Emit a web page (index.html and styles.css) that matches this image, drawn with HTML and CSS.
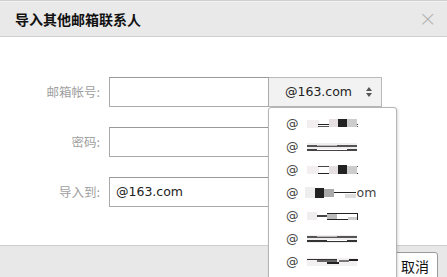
FILE: index.html
```html
<!DOCTYPE html>
<html>
<head lang="zh">
    <meta charset="UTF-8">
    <title>导入其他邮箱联系人</title>
    <link rel="stylesheet" href="styles.css">
</head>
<body>
<div class="dialog">
    <div class="hd">
        <span class="title">导入其他邮箱联系人</span>
        <span class="close">&times;</span>
    </div>
    <div class="bd">
        <div class="row">
            <label>邮箱帐号:</label>
            <div class="ipt"></div>
            <div class="sel">@163.com<span class="arr"></span></div>
        </div>
        <div class="row">
            <label>密码:</label>
            <div class="ipt"></div>
        </div>
        <div class="row">
            <label>导入到:</label>
            <div class="ipt val">@163.com</div>
        </div>
    </div>
    <div class="ft">
        <button class="btn">取消</button>
    </div>
    <!-- 下拉列表 -->
    <ul class="drop">
        <li>@<svg width="52" height="12"><rect x="0" y="2" width="12" height="8" fill="#f3eff1"/><rect x="11" y="6" width="40" height="1" fill="#222"/><rect x="11" y="8" width="40" height="1" fill="#555"/><rect x="22" y="1" width="10" height="8" fill="#e6dfe2"/><rect x="31" y="1" width="9" height="8" fill="#222"/><rect x="40" y="1" width="10" height="8" fill="#ccc"/></svg></li>
        <li>@<svg width="52" height="12"><rect x="0" y="2" width="50" height="8" fill="#f1eef0"/><rect x="0" y="4" width="50" height="2" fill="#555"/><rect x="10" y="4" width="20" height="1" fill="#bbb"/><rect x="0" y="8" width="50" height="2" fill="#444"/><rect x="10" y="8" width="30" height="1" fill="#fff"/></svg></li>
        <li>@<svg width="52" height="12"><rect x="0" y="2" width="12" height="8" fill="#f3eff1"/><rect x="11" y="9" width="40" height="1" fill="#222"/><rect x="11" y="2" width="40" height="1" fill="#444"/><rect x="22" y="2" width="10" height="8" fill="#e6dfe2"/><rect x="31" y="1" width="9" height="9" fill="#222"/><rect x="40" y="2" width="10" height="8" fill="#ccc"/></svg></li>
        <li class="wide">@<svg width="52" height="12"><rect x="0" y="0" width="10" height="11" fill="#eee"/><rect x="10" y="1" width="9" height="10" fill="#222"/><rect x="19" y="2" width="10" height="8" fill="#aaa"/><rect x="29" y="5" width="22" height="1" fill="#222"/><rect x="40" y="7" width="11" height="4" fill="#ddd"/></svg>om</li>
        <li>@<svg width="52" height="12"><rect x="0" y="2" width="10" height="8" fill="#f1eef0"/><rect x="10" y="5" width="10" height="2" fill="#444"/><rect x="20" y="3" width="10" height="6" fill="#bbb"/><rect x="20" y="3" width="31" height="1" fill="#222"/><rect x="20" y="9" width="31" height="1" fill="#222"/><rect x="50" y="3" width="1" height="7" fill="#222"/><rect x="41" y="7" width="9" height="3" fill="#ccc"/></svg></li>
        <li>@<svg width="52" height="12"><rect x="0" y="2" width="50" height="8" fill="#f1eef0"/><rect x="0" y="3" width="50" height="2" fill="#555"/><rect x="10" y="3" width="20" height="1" fill="#bbb"/><rect x="0" y="7" width="50" height="2" fill="#333"/><rect x="20" y="7" width="20" height="1" fill="#fff"/></svg></li>
        <li>@<svg width="52" height="12"><rect x="0" y="2" width="50" height="8" fill="#f3f0f1"/><rect x="0" y="3" width="30" height="1" fill="#333"/><rect x="10" y="4" width="20" height="2" fill="#666"/><rect x="20" y="6" width="12" height="2" fill="#222"/><rect x="32" y="4" width="10" height="2" fill="#777"/><rect x="42" y="3" width="9" height="2" fill="#222"/></svg></li>
    </ul>
</div>
</body>
</html>
```

FILE: styles.css
```css
*{
    margin:0;
    padding:0;
    list-style-type:none;
}
body{
    font-family:"Liberation Sans","Noto Sans CJK SC",sans-serif;
    background:#fff;
}
.dialog{
    width:447px;
    height:277px;
    position:relative;
    overflow:hidden;
    border-top:1px solid #cfcfcf;
}
.hd{
    height:34px;
    background:#e9e9e9;
    border-top:1px solid #f4f4f4;
    border-bottom:1px solid #d0d0d0;
    display:flex;
    align-items:center;
    justify-content:space-between;
    padding:0 10px 0 15px;
}
.title{
    font-size:14px;
    font-weight:bold;
    color:#111;
    font-family:"Noto Sans CJK SC",sans-serif;
}
.close{
    font-size:22px;
    color:#b5b5b5;
    font-family:"DejaVu Sans",sans-serif;
    font-weight:200;
    line-height:1;
}
.bd{
    height:164px;
    padding-top:40px;
    display:flex;
    flex-direction:column;
    gap:20px;
}
.row{
    display:flex;
    align-items:stretch;
    height:30px;
}
.row label{
    width:109px;
    padding-right:9px;
    box-sizing:border-box;
    text-align:right;
    font-size:12.5px;
    line-height:30px;
    color:#a0a0a0;
    font-family:"Noto Sans CJK SC",sans-serif;
}
.ipt{
    width:160px;
    box-sizing:border-box;
    border:1px solid #aaa;
    border-top-color:#999;
}
.val{
    font-family:"DejaVu Sans",sans-serif;
    font-size:12.5px;
    line-height:28px;
    padding-left:6px;
    color:#222;
}
.sel{
    width:113px;
    box-sizing:border-box;
    border:1px solid #b9b9b9;
    border-left:none;
    background:#f2f2f2;
    font-family:"DejaVu Sans",sans-serif;
    font-size:12.5px;
    color:#222;
    line-height:28px;
    padding-left:16px;
    display:flex;
    align-items:center;
    justify-content:space-between;
    padding-right:8px;
}
.arr{
    width:7px;
    height:10px;
    position:relative;
}
.arr:before,.arr:after{
    content:"";
    position:absolute;
    left:0;
    border-left:3.5px solid transparent;
    border-right:3.5px solid transparent;
}
.arr:before{
    top:0;
    border-bottom:4px solid #555;
}
.arr:after{
    bottom:0;
    border-top:4px solid #555;
}
.ft{
    height:34px;
    margin-top:4px;
    background:#e8e8e8;
    border-top:1px solid #cdcdcd;
    display:flex;
    justify-content:flex-end;
    align-items:center;
    padding-right:9px;
}
.btn{
    width:48px;
    height:28px;
    margin-top:6px;
    border:1px solid #999;
    border-radius:3px;
    background:#fff;
    font-size:14px;
    color:#111;
    font-family:"Noto Sans CJK SC",sans-serif;
    text-align:right;
    padding-right:8px;
}
.drop{
    position:absolute;
    left:268px;
    top:106px;
    width:129px;
    height:190px;
    background:#fff;
    border:1px solid #b5b5b5;
    border-radius:3px;
    box-shadow:1px 1px 3px rgba(0,0,0,0.15);
    padding-top:4px;
    box-sizing:border-box;
}
.drop li{
    height:23px;
    display:flex;
    align-items:center;
    padding-left:17px;
    font-family:"DejaVu Sans",sans-serif;
    font-size:12.5px;
    color:#444;
}
.drop svg{
    margin-left:8px;
}
.drop .wide svg{
    margin-left:6px;
}
```
